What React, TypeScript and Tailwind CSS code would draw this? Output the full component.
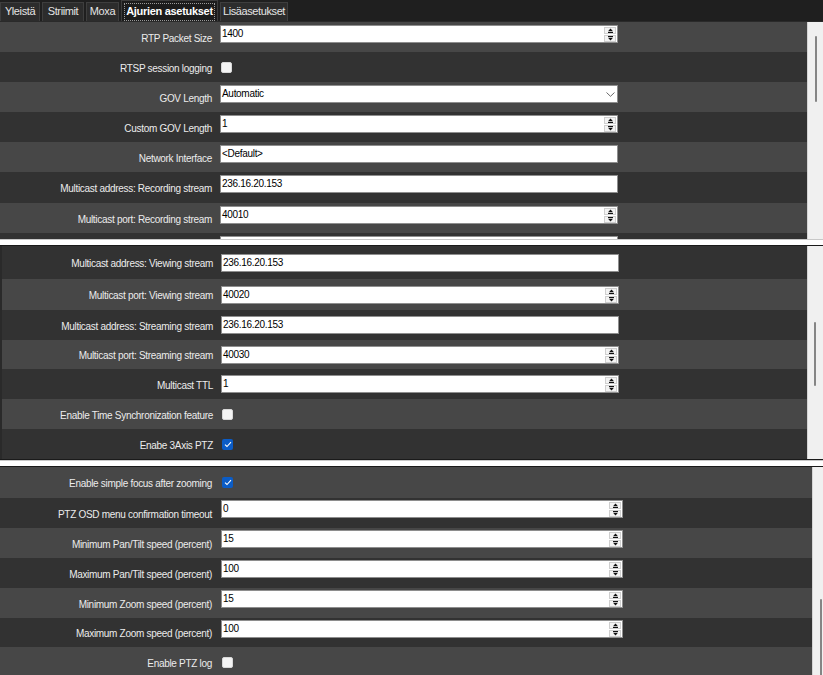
import React from "react";

type Ctl =
  | { t: "spin"; v: string }
  | { t: "text"; v: string }
  | { t: "select"; v: string }
  | { t: "check"; c: boolean };

type RowDef = { label: string; ctl: Ctl; light: boolean; h: number };

function Arrow({ down }: { down?: boolean }) {
  return (
    <svg width="7" height="5" viewBox="0 0 7 5">
      {down ? (
        <>
          <rect x="1" y="0" width="5" height="1" fill="#111" />
          <polygon points="1,1.8 6,1.8 3.5,4.6" fill="#111" />
        </>
      ) : (
        <>
          <polygon points="1,3.2 6,3.2 3.5,0.4" fill="#111" />
          <rect x="1" y="4" width="5" height="1" fill="#111" />
        </>
      )}
    </svg>
  );
}

function Control({ ctl, width }: { ctl: Ctl; width: number }) {
  if (ctl.t === "check") {
    return ctl.c ? (
      <div className="w-[11px] h-[11px] rounded-[2px] bg-[#0b5cc6] flex items-center justify-center">
        <svg width="8" height="7" viewBox="0 0 8 7">
          <polyline points="1,3.6 3,5.5 7,1.2" fill="none" stroke="#ffffff" strokeWidth="1.1" />
        </svg>
      </div>
    ) : (
      <div className="w-[11px] h-[11px] rounded-[2px] bg-[#f4f4f4] border border-[#d8d8d8]" />
    );
  }
  return (
    <div
      className="flex h-[18px] bg-white border border-[#8e8e8e] text-black text-[10px] tracking-[-0.3px] leading-[15px]"
      style={{ width }}
    >
      <span className="flex-1 pl-[1px] whitespace-nowrap overflow-hidden">{ctl.v}</span>
      {ctl.t === "spin" && (
        <div className="flex flex-col gap-[1px] w-[12px] my-[1px] mr-[1px]">
          <div className="h-[7px] bg-[#f3f3f3] border border-[#cfcfcf] flex items-center justify-center">
            <Arrow />
          </div>
          <div className="h-[7px] bg-[#f3f3f3] border border-[#cfcfcf] flex items-center justify-center">
            <Arrow down />
          </div>
        </div>
      )}
      {ctl.t === "select" && (
        <div className="w-[14px] flex items-center justify-center">
          <svg width="9" height="5" viewBox="0 0 9 5">
            <polyline points="0.5,0.5 4.5,4.3 8.5,0.5" fill="none" stroke="#6a6a6a" strokeWidth="1" />
          </svg>
        </div>
      )}
    </div>
  );
}

function Row({
  r,
  labelW,
  gap,
  inputW,
  centered,
  top,
}: {
  r: RowDef;
  labelW: number;
  gap: number;
  inputW: number;
  centered: boolean;
  top: number;
}) {
  const isCheck = r.ctl.t === "check";
  return (
    <div
      className={`flex shrink-0 ${r.light ? "bg-[#474747]" : "bg-[#323232]"}`}
      style={{ height: r.h }}
    >
      <div
        className="text-right text-[#ececec] text-[10px] tracking-[-0.3px] self-center whitespace-nowrap pt-[2px]"
        style={{ width: labelW }}
      >
        {r.label}
      </div>
      <div
        className={isCheck || centered ? "self-center" : ""}
        style={{ marginLeft: isCheck ? gap + 1 : gap, marginTop: isCheck || centered ? 0 : top }}
      >
        <Control ctl={r.ctl} width={inputW} />
      </div>
    </div>
  );
}

function Scroll({ w, thumbTop, thumbH, thumbX }: { w: number; thumbTop: number; thumbH: number; thumbX: number }) {
  return (
    <div className="bg-[#f0f0f0] border-l border-[#d4d4d4] shrink-0 flex" style={{ width: w }}>
      <div
        className="w-[2px] bg-[#858585] rounded-full"
        style={{ marginLeft: thumbX, marginTop: thumbTop, height: thumbH }}
      />
    </div>
  );
}

const p1: RowDef[] = [
  { label: "RTP Packet Size", ctl: { t: "spin", v: "1400" }, light: true, h: 30 },
  { label: "RTSP session logging", ctl: { t: "check", c: false }, light: false, h: 30 },
  { label: "GOV Length", ctl: { t: "select", v: "Automatic" }, light: true, h: 30 },
  { label: "Custom GOV Length", ctl: { t: "spin", v: "1" }, light: false, h: 30 },
  { label: "Network Interface", ctl: { t: "text", v: "<Default>" }, light: true, h: 30 },
  { label: "Multicast address: Recording stream", ctl: { t: "text", v: "236.16.20.153" }, light: false, h: 31 },
  { label: "Multicast port: Recording stream", ctl: { t: "spin", v: "40010" }, light: true, h: 30 },
  { label: "", ctl: { t: "text", v: "" }, light: false, h: 30 },
];

const p2: RowDef[] = [
  { label: "Multicast address: Viewing stream", ctl: { t: "text", v: "236.16.20.153" }, light: false, h: 33 },
  { label: "Multicast port: Viewing stream", ctl: { t: "spin", v: "40020" }, light: true, h: 31 },
  { label: "Multicast address: Streaming stream", ctl: { t: "text", v: "236.16.20.153" }, light: false, h: 30 },
  { label: "Multicast port: Streaming stream", ctl: { t: "spin", v: "40030" }, light: true, h: 29 },
  { label: "Multicast TTL", ctl: { t: "spin", v: "1" }, light: false, h: 30 },
  { label: "Enable Time Synchronization feature", ctl: { t: "check", c: false }, light: true, h: 30 },
  { label: "Enabe 3Axis PTZ", ctl: { t: "check", c: true }, light: false, h: 30 },
];

const p3: RowDef[] = [
  { label: "Enable simple focus after zooming", ctl: { t: "check", c: true }, light: true, h: 31 },
  { label: "PTZ OSD menu confirmation timeout", ctl: { t: "spin", v: "0" }, light: false, h: 30 },
  { label: "Minimum Pan/Tilt speed (percent)", ctl: { t: "spin", v: "15" }, light: true, h: 30 },
  { label: "Maximum Pan/Tilt speed (percent)", ctl: { t: "spin", v: "100" }, light: false, h: 30 },
  { label: "Minimum Zoom speed (percent)", ctl: { t: "spin", v: "15" }, light: true, h: 30 },
  { label: "Maximum Zoom speed (percent)", ctl: { t: "spin", v: "100" }, light: false, h: 29 },
  { label: "Enable PTZ log", ctl: { t: "check", c: false }, light: true, h: 30 },
];

const tabs: { t: string; w: string }[] = [
  { t: "Yleistä", w: "w-[40px]" },
  { t: "Striimit", w: "w-[42px]" },
  { t: "Moxa", w: "w-[33px]" },
  { t: "Ajurien asetukset", w: "w-[97px]" },
  { t: "Lisäasetukset", w: "w-[68px]" },
];

export default function App() {
  return (
    <div className="w-[823px] h-[675px] overflow-hidden bg-white flex flex-col font-['Liberation_Sans',Arial,sans-serif]">
      {/* Panel 1 */}
      <div className="h-[239px] shrink-0 flex flex-col bg-[#202020] overflow-hidden">
        <div className="h-[22px] shrink-0 flex items-end gap-[2px] bg-[#1f1f1f] border-b border-[#2a2a2a]">
          {tabs.map((tab, i) =>
            i === 3 ? (
              <div
                key={tab.t}
                className={`${tab.w} h-[21px] px-[2px] pt-[2px] bg-[#1c1c1c] border border-b-0 border-[#3c3c3c] flex`}
              >
                <div className="flex-1 text-center border border-dotted border-[#9a9a9a] text-[11px] tracking-[-0.3px] font-bold text-white leading-[14px]">
                  {tab.t}
                </div>
              </div>
            ) : (
              <div
                key={tab.t}
                className={`${tab.w} h-[19px] text-center bg-[#2c2c2c] border border-b-0 border-[#3e3e3e] text-[11px] tracking-[-0.4px] text-[#e4e4e4] leading-[17px]`}
              >
                {tab.t}
              </div>
            )
          )}
        </div>
        <div className="flex flex-1 overflow-hidden">
          <div className="w-[807px] flex flex-col overflow-hidden">
            {p1.map((r, i) => (
              <Row key={i} r={r} labelW={212} gap={8} inputW={398} centered={false} top={3} />
            ))}
          </div>
          <Scroll w={16} thumbTop={14} thumbH={66} thumbX={7} />
        </div>
      </div>
      {/* separator */}
      <div className="h-[6px] shrink-0 bg-white border-t border-[#c8c8c8]" />
      {/* Panel 2 */}
      <div className="h-[215px] shrink-0 flex border-y border-[#1a1a1a] bg-[#323232] overflow-hidden">
        <div className="w-[807px] flex flex-col border-l-2 border-[#2a2a2a]">
          {p2.map((r, i) => (
            <Row key={i} r={r} labelW={211} gap={8} inputW={398} centered={true} top={0} />
          ))}
        </div>
        <Scroll w={16} thumbTop={76} thumbH={64} thumbX={6} />
      </div>
      {/* separator */}
      <div className="h-[6px] shrink-0 bg-white border-t border-[#c8c8c8]" />
      {/* Panel 3 */}
      <div className="flex-1 flex border-t border-[#1a1a1a] bg-[#474747] overflow-hidden">
        <div className="w-[812px] flex flex-col">
          {p3.map((r, i) => (
            <Row key={i} r={r} labelW={212} gap={9} inputW={402} centered={false} top={2} />
          ))}
        </div>
        <Scroll w={11} thumbTop={132} thumbH={100} thumbX={7} />
      </div>
    </div>
  );
}
